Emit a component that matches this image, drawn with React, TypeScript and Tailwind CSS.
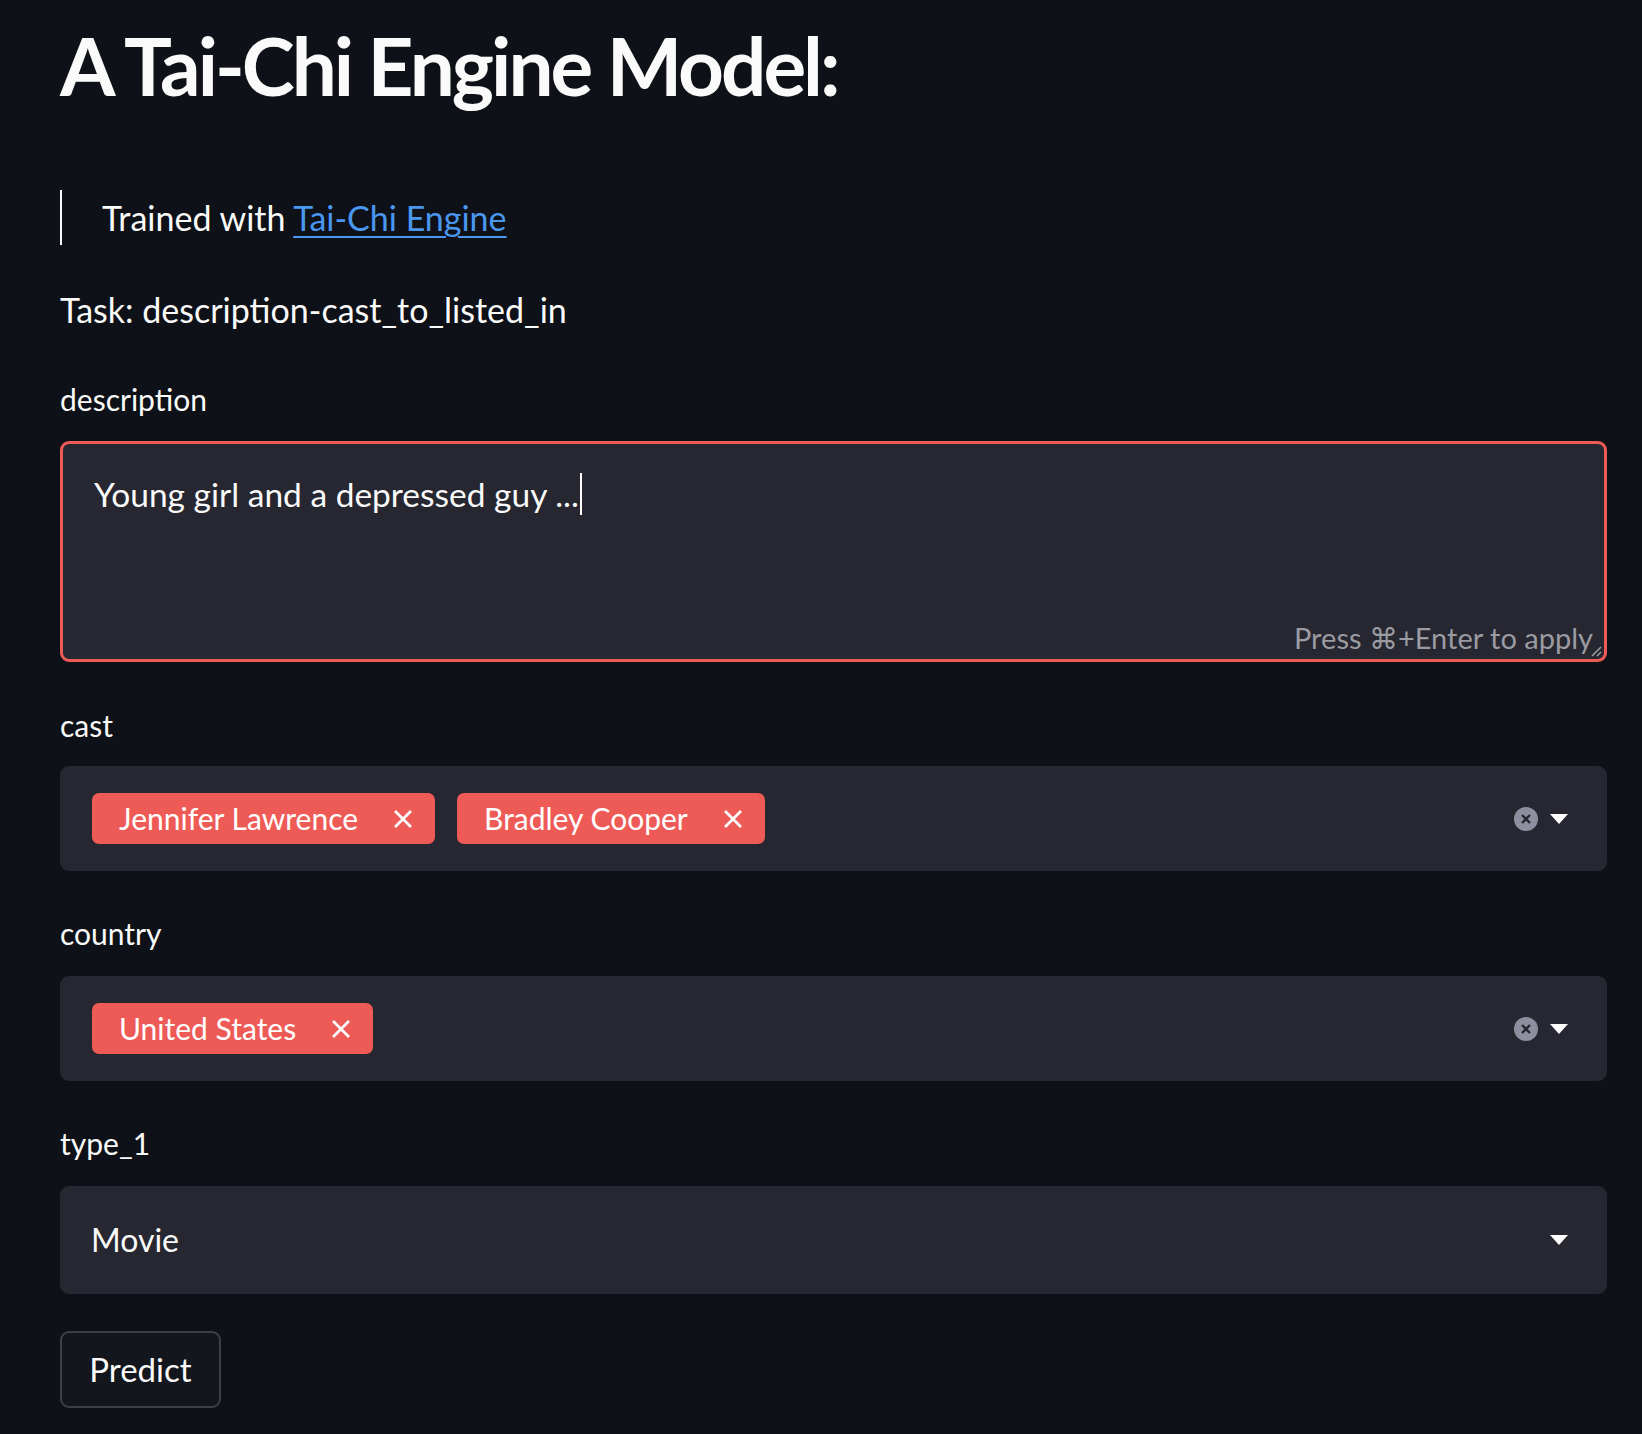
const font = { fontFamily: "Lato, 'Open Sans', sans-serif" };

function TagX() {
  return (
    <svg width="22" height="22" viewBox="0 0 22 22" className="shrink-0">
      <path d="M3 3 L19 19 M19 3 L3 19" stroke="#ffffff" strokeWidth="2.6" strokeLinecap="butt" />
    </svg>
  );
}

function Tag({ label }: { label: string }) {
  return (
    <div className="flex h-[51px] items-center gap-[34px] rounded-[7px] bg-[#ee5b56] pl-[27px] pr-[21px] text-[30px] text-white">
      <span>{label}</span>
      <TagX />
    </div>
  );
}

function Caret() {
  return (
    <svg width="18" height="10" viewBox="0 0 18 10">
      <path d="M0 0 H18 L9 10 Z" fill="#ffffff" />
    </svg>
  );
}

function ClearIcon() {
  return (
    <svg width="24" height="24" viewBox="0 0 24 24">
      <circle cx="12" cy="12" r="12" fill="#8d8f9e" />
      <path d="M8 8 L16 16 M16 8 L8 16" stroke="#262730" strokeWidth="2.4" />
    </svg>
  );
}

function MultiSelect({ tags }: { tags: string[] }) {
  return (
    <div className="flex h-[105px] items-center rounded-[9px] bg-[#262730] pl-[32px] pr-[39px]">
      <div className="flex flex-1 items-center gap-[22px]">
        {tags.map((t) => (
          <Tag key={t} label={t} />
        ))}
      </div>
      <div className="flex items-center gap-[12px]">
        <ClearIcon />
        <Caret />
      </div>
    </div>
  );
}

function Label({ text }: { text: string }) {
  return <div className="flex h-[38px] items-center text-[30px] text-[#fafafa]">{text}</div>;
}

export default function App() {
  return (
    <div className="min-h-screen bg-[#0e1117] pl-[60px] pr-[35px] text-[#fafafa]" style={font}>
      <div className="flex h-[130px] items-center text-[80px] font-bold tracking-[-3px]">
        A Tai-Chi Engine Model:
      </div>

      <div className="mt-[60px] flex h-[55px] items-center border-l-2 border-[#fafafa] pl-[40px] text-[34px]">
        <span>
          Trained with{" "}
          <a href="#" className="text-[#4a97f0] underline decoration-2 underline-offset-[5px]">
            Tai-Chi Engine
          </a>
        </span>
      </div>

      <div className="mt-[34px] flex h-[60px] items-center text-[34px]">
        Task: description-cast_to_listed_in
      </div>

      <div className="mt-[41px]">
        <Label text="description" />
      </div>
      <div className="relative mt-[23px] h-[221px] rounded-[9px] border-[3px] border-[#ee5b56] bg-[#262730] px-[31px] pt-[25px] text-[33.5px]">
        <div className="flex items-center">
          <span>Young girl and a depressed guy ...</span>
          <span className="ml-[1px] inline-block h-[42px] w-[2px] bg-white" />
        </div>
        <div className="absolute bottom-[0px] right-[11px] text-[29px] text-[#9a9ba3]">
          Press ⌘+Enter to apply
        </div>
        <svg className="absolute bottom-[2px] right-[2px]" width="12" height="12" viewBox="0 0 12 12">
          <path d="M2 11 L11 2 M7 11 L11 7" stroke="#9a9ba3" strokeWidth="1.5" />
        </svg>
      </div>

      <div className="mt-[44px]">
        <Label text="cast" />
      </div>
      <div className="mt-[22px]">
        <MultiSelect tags={["Jennifer Lawrence", "Bradley Cooper"]} />
      </div>

      <div className="mt-[43px]">
        <Label text="country" />
      </div>
      <div className="mt-[24px]">
        <MultiSelect tags={["United States"]} />
      </div>

      <div className="mt-[43px]">
        <Label text="type_1" />
      </div>
      <div className="mt-[24px] flex h-[108px] items-center rounded-[9px] bg-[#262730] pl-[31px] pr-[39px]">
        <span className="flex-1 text-[32px]">Movie</span>
        <Caret />
      </div>

      <button className="mt-[37px] flex h-[77px] w-[161px] items-center justify-center rounded-[9px] border-2 border-[#3d3f47] bg-[#13161d] text-[33px] text-[#fafafa]">
        Predict
      </button>
      <div className="h-[30px]" />
    </div>
  );
}
